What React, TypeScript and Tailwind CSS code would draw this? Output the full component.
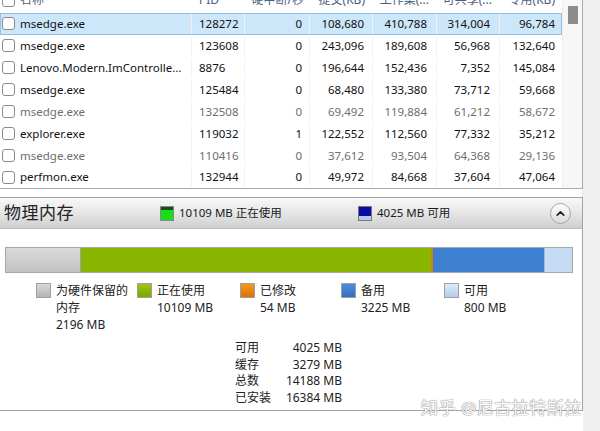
import { ChevronUp } from 'lucide-react';

type Proc = {
  name: string;
  pid: string;
  irq: string;
  commit: string;
  ws: string;
  share: string;
  priv: string;
  dim?: boolean;
  sel?: boolean;
};

const procs: Proc[] = [
  { name: 'msedge.exe', pid: '128272', irq: '0', commit: '108,680', ws: '410,788', share: '314,004', priv: '96,784', sel: true },
  { name: 'msedge.exe', pid: '123608', irq: '0', commit: '243,096', ws: '189,608', share: '56,968', priv: '132,640' },
  { name: 'Lenovo.Modern.ImControlle...', pid: '8876', irq: '0', commit: '196,644', ws: '152,436', share: '7,352', priv: '145,084' },
  { name: 'msedge.exe', pid: '125484', irq: '0', commit: '68,480', ws: '133,380', share: '73,712', priv: '59,668' },
  { name: 'msedge.exe', pid: '132508', irq: '0', commit: '69,492', ws: '119,884', share: '61,212', priv: '58,672', dim: true },
  { name: 'explorer.exe', pid: '119032', irq: '1', commit: '122,552', ws: '112,560', share: '77,332', priv: '35,212' },
  { name: 'msedge.exe', pid: '110416', irq: '0', commit: '37,612', ws: '93,504', share: '64,368', priv: '29,136', dim: true },
  { name: 'perfmon.exe', pid: '132944', irq: '0', commit: '49,972', ws: '84,668', share: '37,604', priv: '47,064' },
];

const legend = [
  { color: 'bg-linear-to-b from-[#d8d8d8] to-[#b4b4b4]', label: ['为硬件保留的', '内存'], value: '2196 MB', w: 'w-[101px]' },
  { color: 'bg-linear-to-b from-[#9cc41a] to-[#7ea600]', label: ['正在使用'], value: '10109 MB', w: 'w-[103px]' },
  { color: 'bg-linear-to-b from-[#f39a1e] to-[#dc7200]', label: ['已修改'], value: '54 MB', w: 'w-[101px]' },
  { color: 'bg-linear-to-b from-[#4c8ed8] to-[#336fc0]', label: ['备用'], value: '3225 MB', w: 'w-[103px]' },
  { color: 'bg-linear-to-b from-[#dce9f9] to-[#b3cdee]', label: ['可用'], value: '800 MB', w: 'w-[100px]' },
];

function Box() {
  return <span className="w-[13px] h-[13px] shrink-0 rounded-[3px] border border-[#8a8a8a] bg-white" />;
}

export default function App() {
  return (
    <div className="w-[600px] h-[431px] overflow-hidden relative flex bg-[#f0f0f0] text-[#1a1a1a] font-['Noto_Sans','Noto_Sans_CJK_SC',sans-serif]">
      <div className="w-[583px] flex flex-col bg-white">
        {/* 进程列表 */}
        <div className="h-[189px] flex border-r border-b border-[#a9a9a9] overflow-hidden">
          <div className="w-[562px] flex flex-col">
            {/* 表头（上半部分被滚出视野） */}
            <div className="-mt-[13px] h-[26px] flex items-center text-[12px] text-[#4c607a] shrink-0">
              <div className="w-[192px] flex items-center gap-[5px] pl-[2px]"><Box /><span>名称</span></div>
              <div className="w-[53px] pl-[7px]">PID</div>
              <div className="w-[65px] pr-[6px] text-right">硬中断/秒</div>
              <div className="w-[63px] pr-[8px] text-right">提交(KB)</div>
              <div className="w-[64px] pr-[8px] text-right">工作集(...</div>
              <div className="w-[63px] pr-[8px] text-right">可共享(...</div>
              <div className="w-[62px] pr-[7px] text-right">专用(KB)</div>
            </div>
            {procs.map((p, i) => (
              <div
                key={i}
                className={`h-[22px] flex items-center text-[11.5px] border ${p.sel ? 'bg-[#cce6fa] border-[#8fc1ea]' : 'border-transparent'} ${p.dim ? 'text-[#6e6e6e]' : 'text-[#111]'}`}
              >
                <div className="w-[191px] flex items-center gap-[5px] pl-[1px] h-full border-r border-[#f2f2f2]"><Box /><span className="whitespace-nowrap">{p.name}</span></div>
                <div className="w-[53px] pl-[7px] h-full flex items-center border-r border-[#f2f2f2]">{p.pid}</div>
                <div className="w-[65px] pr-[7px] h-full flex items-center justify-end border-r border-[#f2f2f2]">{p.irq}</div>
                <div className="w-[63px] pr-[8px] h-full flex items-center justify-end border-r border-[#f2f2f2]">{p.commit}</div>
                <div className="w-[64px] pr-[9px] h-full flex items-center justify-end border-r border-[#f2f2f2]">{p.ws}</div>
                <div className="w-[63px] pr-[9px] h-full flex items-center justify-end border-r border-[#f2f2f2]">{p.share}</div>
                <div className="flex-1 pr-[6px] h-full flex items-center justify-end">{p.priv}</div>
              </div>
            ))}
          </div>
          <div className="flex-1 bg-[#f7f7f7] flex justify-center pt-[6px] border-l border-[#eeeeee]">
            <div className="w-[10px] h-[18px] bg-[#8c8c8c]" />
          </div>
        </div>

        <div className="h-[8px] border-r border-[#e5e5e5]" />

        {/* 物理内存 */}
        <div className="h-[214px] flex flex-col border-t border-r border-b border-[#a4a4a4]">
          <div className="h-[31px] flex items-center bg-linear-to-b from-[#f8f8f8] via-[#e6e6e6] to-[#cfcfcf] border-b border-[#bdbdbd] shrink-0">
            <span className="pl-[4px] w-[160px] text-[17px] text-[#222] tracking-[0.5px]">物理内存</span>
            <span className="w-[14px] h-[15px] border border-[#888] flex flex-col mr-[5px]">
              <span className="h-[3px] bg-[#1a4d1a]" />
              <span className="flex-1 bg-[#18e018]" />
            </span>
            <span className="w-[179px] text-[11.5px]">10109 MB 正在使用</span>
            <span className="w-[14px] h-[15px] border border-[#777] flex flex-col mr-[5px]">
              <span className="flex-1 bg-[#0b0ba8]" />
              <span className="h-[4px] bg-[#b7c9ee]" />
            </span>
            <span className="text-[11.5px]">4025 MB 可用</span>
            <span className="ml-auto mr-[11px] w-[21px] h-[21px] rounded-full border border-[#a6a6a6] bg-linear-to-b from-white to-[#dadada] flex items-center justify-center">
              <ChevronUp size={13} strokeWidth={3.2} className="text-[#222]" />
            </span>
          </div>

          <div className="pt-[18px] px-[5px] pr-[9px]">
            <div className="h-[26px] flex border border-[#a8a8a8]">
              <div className="w-[75px] bg-linear-to-b from-[#d9d9d9] to-[#c3c3c3] border-r border-[#a0a0a0]" />
              <div className="w-[350px] bg-[#8ab500]" />
              <div className="w-[2px] bg-[#d87c1e]" />
              <div className="w-[111px] bg-[#3d80d0]" />
              <div className="flex-1 bg-[#c6dbf4] border-l border-[#9fbde4]" />
            </div>
          </div>

          <div className="flex pl-[36px] pt-[9px] text-[12px] leading-[17px] text-[#222]">
            {legend.map((l, i) => (
              <div key={i} className={`${l.w} flex gap-[5px]`}>
                <span className={`w-[15px] h-[15px] mt-[1px] shrink-0 border border-[#a0a0a0] ${l.color}`} />
                <div className="flex flex-col">
                  {l.label.map((t, j) => <span key={j}>{t}</span>)}
                  <span>{l.value}</span>
                </div>
              </div>
            ))}
          </div>

          <div className="pl-[235px] pt-[7px] text-[12px] leading-[16.5px] text-[#222]">
            {[
              ['可用', '4025 MB'],
              ['缓存', '3279 MB'],
              ['总数', '14188 MB'],
              ['已安装', '16384 MB'],
            ].map(([k, v]) => (
              <div key={k} className="flex w-[107px]">
                <span>{k}</span>
                <span className="ml-auto">{v}</span>
              </div>
            ))}
          </div>
        </div>
      </div>

      {/* 水印 */}
      <div className="absolute left-[421px] top-[395px] text-[17px] text-white tracking-[0.5px] [text-shadow:0_0_1px_#7a7a7a,0_0_1px_#7a7a7a]">
        知乎 @尼古拉特斯拉
      </div>
    </div>
  );
}
